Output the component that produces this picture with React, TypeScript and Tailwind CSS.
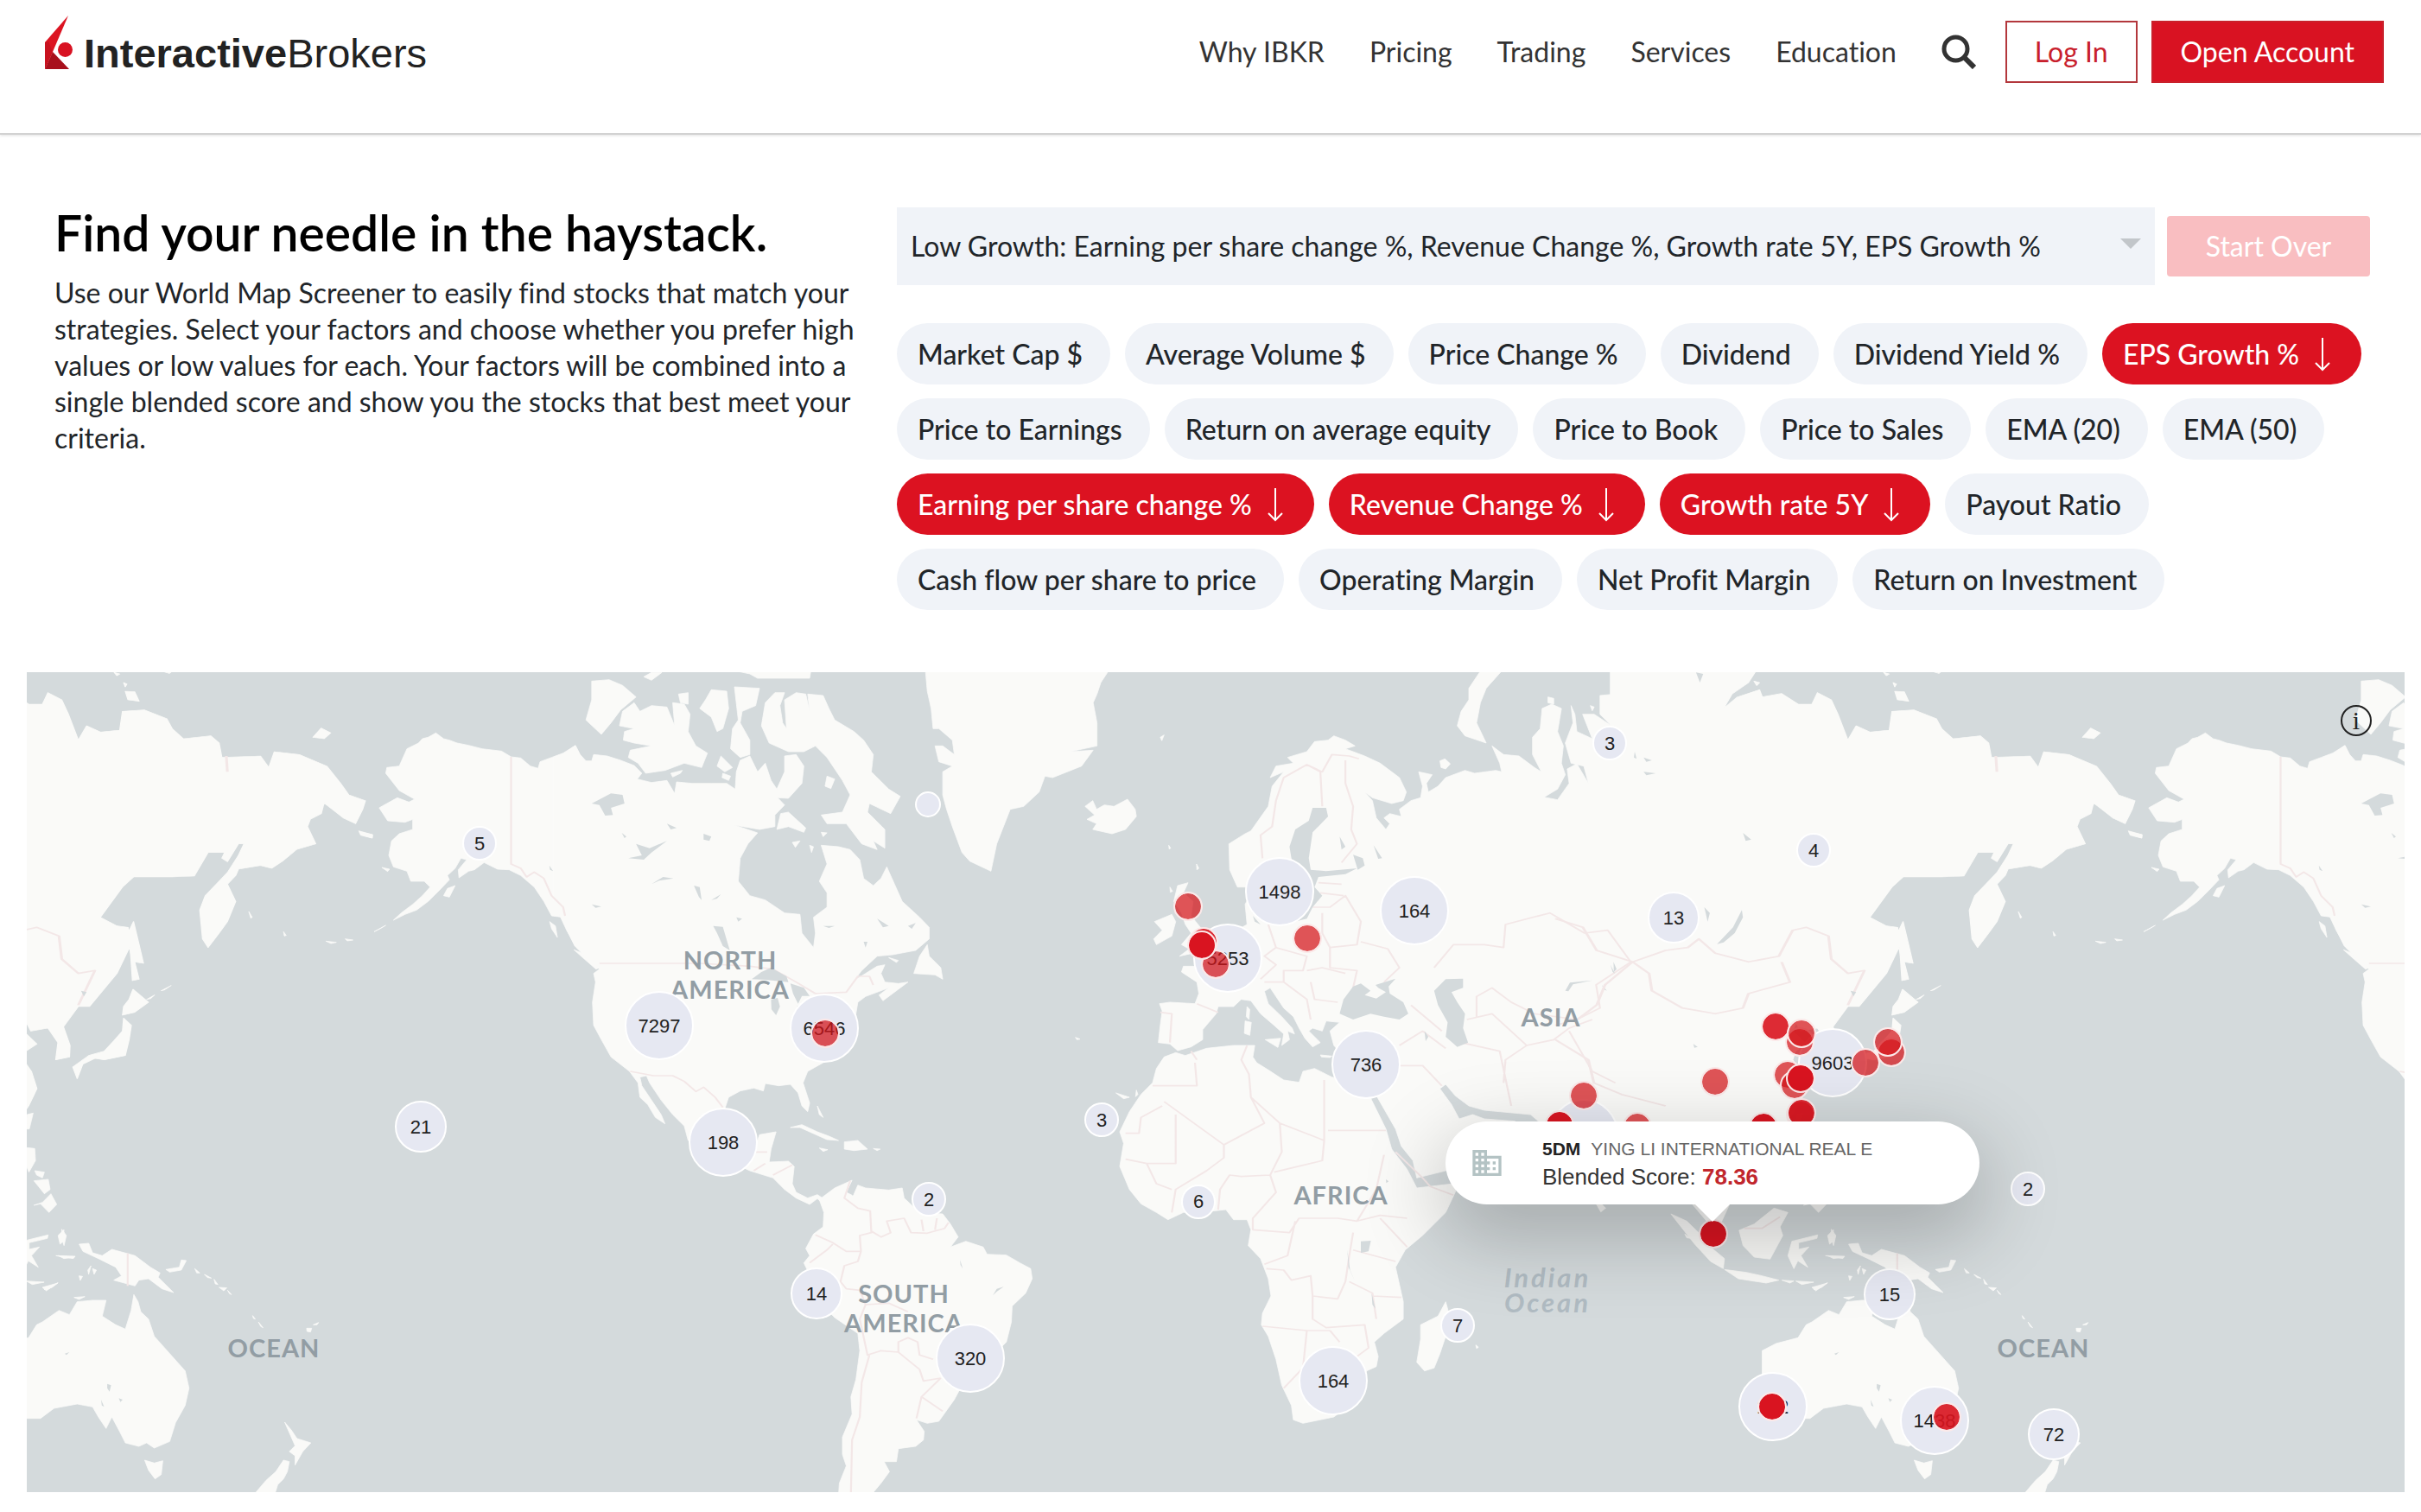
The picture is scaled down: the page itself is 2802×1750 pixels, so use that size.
import { useState } from 'react';
import { MdDomain } from 'react-icons/md';

const NAV = ['Why IBKR', 'Pricing', 'Trading', 'Services', 'Education'];

const FACTORS = [
    'Market Cap $', 'Average Volume $', 'Price Change %', 'Dividend', 'Dividend Yield %', 'EPS Growth %',
    'Price to Earnings', 'Return on average equity', 'Price to Book', 'Price to Sales', 'EMA (20)', 'EMA (50)',
    'Earning per share change %', 'Revenue Change %', 'Growth rate 5Y', 'Payout Ratio',
    'Cash flow per share to price', 'Operating Margin', 'Net Profit Margin', 'Return on Investment',
];

const LOW_GROWTH = ['EPS Growth %', 'Earning per share change %', 'Revenue Change %', 'Growth rate 5Y'];

// Visible window of the world, in map units. One world is 2048 units wide.
const VIEW = { x: 31, y: 778, w: 2752, h: 949 };
const WORLD = 2048;

// Coastlines, split in sheets that each carry their own origin and scale.
const SHEETS = [
    {
        id: 'alaska',
        transform: 'translate(0 760) scale(0.44643 0.33333)',
        land: [
            'M1130 265 1150 285 1165 290 1185 300 1215 308 1250 320 1300 328 1325 348 1350 352 1375 380 1395 388 1400 365 1430 350 1460 335 1490 310 1505 345 1505 1015 1490 1005 1470 950 1460 905 1430 900 1410 850 1385 800 1350 760 1320 740 1290 738 1255 715 1230 740 1215 745 1190 768 1188 740 1210 705 1195 700 1180 735 1160 760 1165 775 1140 810 1110 850 1080 880 1050 895 1020 915 1040 890 1070 860 1095 830 1115 800 1100 780 1065 780 1055 745 1020 730 1008 690 1015 640 1035 615 1070 600 1070 565 1050 575 1005 570 983 525 1030 490 1060 505 1075 495 1035 465 1000 405 1003 385 1035 380 1055 320 1085 300 1095 285 1110 280Z',
            'M930 605 965 618 965 630 935 620Z M990 732 1010 738 1005 746Z M1180 795 1165 835 1150 830 1160 805Z',
            'M970 955 1000 933 985 945Z M845 988 872 992 858 996Z M895 980 915 984 900 987Z M735 955 742 968 737 970Z M645 885 654 905 650 908Z',
            'M1425 920 1440 935 1445 975 1430 945Z M1488 1018 1520 1035 1555 1080 1545 1085 1515 1050Z',
        ],
        water: [],
        borders: ['M1325 348V720L1350 735 1365 765 1385 748 1410 770 1430 830 1460 870 1465 900'],
    },
    {
        id: 'north-america',
        transform: 'translate(600 760) scale(0.44643 0.33333)',
        land: [
            'M90 350 120 335 148 308 160 340 175 362 190 362 195 340 230 345 265 360 300 378 320 405 308 425 345 437 385 430 405 475 410 435 450 440 500 440 540 440 562 460 565 400 575 360 600 345 620 400 640 370 655 430 670 460 690 400 690 345 720 340 740 380 735 440 700 492 672 490 690 515 665 550 665 590 625 600 560 585 620 612 595 650 575 700 570 780 600 830 640 845 690 890 730 895 735 960 765 1010 770 960 765 905 800 870 800 820 780 780 800 720 785 655 830 660 860 670 885 705 895 770 920 795 940 770 955 730 975 790 995 850 1040 905 1065 940 1065 980 1030 1020 970 1035 930 1040 890 1090 870 1125 900 1100 930 1075 950 1070 940 1100 950 1130 985 1135 1010 1130 985 1155 945 1195 935 1175 960 1150 900 1180 880 1200 875 1240 870 1300 845 1370 790 1410 750 1440 738 1480 755 1550 750 1580 735 1560 725 1515 705 1485 675 1490 640 1482 635 1508 610 1498 575 1508 545 1530 535 1570 540 1640 580 1690 615 1700 625 1660 668 1650 655 1710 650 1755 700 1752 715 1770 710 1830 720 1860 750 1880 775 1868 800 1890 795 1905 775 1882 755 1902 720 1880 690 1850 660 1810 600 1785 560 1760 500 1745 440 1680 430 1630 400 1590 370 1540 340 1480 332 1455 315 1460 320 1490 345 1540 370 1590 380 1622 355 1600 335 1555 315 1530 310 1480 288 1440 240 1390 215 1330 195 1280 192 1200 200 1130 195 1100 210 1085 180 1050 150 1010 125 950 90 850Z',
            'M190 85 235 80 270 100 305 140 265 185 240 230 215 270 175 220 190 150Z',
            'M300 160 315 190 345 170 385 175 405 240 400 160 430 165 445 200 440 260 460 310 490 335 475 385 430 370 380 395 330 405 310 370 285 350 290 325 345 310 300 300 272 290 275 260 300 250 262 240 270 190Z',
            'M415 130 440 125 440 165 420 160Z M325 70 345 55 372 55 345 82Z M485 150 500 115 540 120 545 180 530 250 515 260 500 210 470 180Z',
            'M560 105 625 110 615 170 580 190 575 230 600 290 600 340 575 350 550 320 555 250 570 220Z M565 50 758 50 755 75 620 75 600 60Z',
            'M640 160 665 125 690 125 678 170 685 230 695 250 690 150 720 125 745 130 755 190 750 130 790 135 805 180 820 220 870 260 895 290 920 340 915 400 960 460 990 485 965 545 910 510 905 540 950 600 950 665 920 640 930 670 890 650 850 580 800 580 785 550 840 540 860 480 840 430 800 350 770 310 740 330 700 330 650 300 640 270 630 240Z',
            'M680 545 700 540 745 595 740 610 700 590 670 600Z M525 345 555 385 535 400 515 380Z M800 415 820 425 810 458 795 450Z M710 645 730 640 718 662Z M785 610 800 612 790 625Z M755 655 765 660 760 680Z M530 405 550 415 545 430 528 420Z M395 405 425 395 420 405 400 418Z',
            'M1060 1000 1065 1040 1095 1080 1100 1120 1080 1105 1025 1100 1040 1040Z M960 1045 985 1055 980 1062Z',
            'M1055 45 1532 45 1510 90 1500 130 1490 160 1500 230 1500 310 1430 330 1490 325 1460 380 1385 420 1365 415 1350 470 1310 520 1275 530 1240 650 1225 745 1170 710 1150 680 1125 590 1110 530 1100 480 1100 400 1125 380 1090 365 1080 310 1100 310 1130 340 1125 290 1090 250 1075 250 1070 180 1060 120Z',
            'M705 1635 735 1625 775 1650 805 1665 830 1680 800 1677 775 1662 730 1635Z M845 1685 880 1680 905 1710 870 1715 845 1710Z M780 1706 802 1712 790 1718Z M920 1708 938 1710 930 1715Z M775 1560 790 1600 780 1590Z',
        ],
        water: [
            'M190 510 240 475 270 480 275 510 240 525 245 550 225 552 210 515Z M285 700 320 690 305 650 340 665 385 640 345 680 325 705Z M345 790 375 765 402 770 365 778Z M505 935 530 938 548 1020 530 1005 515 960Z M455 795 470 800 475 845 468 835Z',
            'M605 1120 630 1095 655 1080 695 1110 700 1130 640 1122Z M655 1190 672 1185 678 1215 668 1245 656 1225Z M705 1135 740 1150 755 1178 735 1178 725 1205 712 1170Z M720 1215 765 1200 745 1212Z',
            'M268 612 280 625 275 630Z M385 580 410 595 395 600Z M480 615 500 625 495 640 480 635Z M565 905 580 910 570 920Z M930 910 960 935 945 940Z M1010 935 1030 925 1020 945Z M790 935 820 935 805 942Z M895 990 905 990 900 1010Z M190 860 215 868 200 872Z M500 845 525 825 515 840Z M80 725 90 745 82 740Z',
        ],
        borders: [
            'M210 1065H470L600 1075 660 1085 720 1130 770 1170 850 1165 880 1110 910 1110 920 1140',
            'M290 1440 350 1455 400 1455 430 1475 460 1510 480 1495 510 1530 530 1565',
            'M615 1720 645 1720M610 1785 640 1760M660 1800 710 1765',
        ],
    },
    {
        id: 'south-america',
        transform: 'translate(600 1240) scale(0.44643 0.33333)',
        land: [
            'M780 445 820 405 865 378 850 420 868 432 880 395 900 405 960 412 995 405 1000 440 1040 490 1100 495 1120 530 1140 575 1120 610 1160 590 1205 610 1215 635 1265 638 1300 665 1328 685 1332 720 1315 770 1280 815 1278 870 1265 940 1250 960 1230 1040 1150 1090 1130 1140 1090 1215 1060 1222 1032 1210 1052 1250 1050 1280 1030 1302 985 1310 980 1355 948 1355 962 1390 940 1430 915 1470 830 1470 832 1430 850 1370 840 1330 840 1270 865 1190 862 1130 875 1070 885 970 880 910 820 855 780 800 760 720 740 665 755 640 745 615 765 565 790 540 792 490Z',
        ],
        water: ['M862 415 870 420 866 432Z M1145 655 1152 685 1146 672Z M1230 778 1240 755 1258 748 1240 765Z'],
        borders: [
            'M860 380 845 440 880 475 912 485 915 560 885 570 888 625 850 625 815 595 770 568M755 665 800 620 815 600M888 625 880 660 845 675 835 730 850 755 885 760 900 810 960 805 1010 835',
            'M915 555 940 575 965 560 955 520 1000 510 1018 560 1060 562 1105 545 1115 525M900 810 885 860 905 985 940 970 985 975 1040 1035 1050 1075 1095 1065M985 975 985 940 1010 925 1035 940 1040 985 1075 1000M910 985 890 1080 885 1200 865 1280 862 1464M1095 1065 1045 1130 1100 1180M1045 1130 1032 1205M1045 515 1050 555M1085 510 1080 550',
        ],
    },
    {
        id: 'europe-africa',
        transform: 'translate(1200 760) scale(0.44643 0.33333)',
        land: [
            'M125 520 145 500 155 530 175 515 200 520 235 495 255 530 258 555 230 600 195 615 145 600 155 580 130 565 150 550Z',
            'M498 650 540 615 555 605 600 520 610 450 640 400 605 420 620 380 665 370 650 350 700 330 720 295 755 290 770 275 800 290 825 310 800 320 850 345 890 370 940 420 958 470 950 500 920 510 870 490 850 470 870 500 880 560 905 600 915 580 900 560 915 545 945 555 940 530 970 500 995 490 1000 450 990 400 1025 410 1010 440 1015 470 1040 450 1060 420 1110 395 1135 405 1190 395 1205 400 1200 370 1180 310 1210 340 1250 345 1290 385 1308 400 1285 340 1285 280 1305 250 1310 180 1335 165 1360 180 1350 260 1365 310 1360 370 1370 410 1350 460 1315 488 1350 497 1380 440 1375 390 1400 372 1430 440 1418 380 1385 370 1370 300 1390 230 1385 170 1395 200 1400 260 1440 285 1415 200 1445 200 1490 240 1460 200 1460 135 1540 125 1530 80 1530 45 1568 45 1568 1650 1300 1650 1300 1613 1280 1590 1160 1575 1120 1560 1085 1525 1060 1485 1045 1500 1075 1555 1095 1605 1130 1590 1160 1605 1240 1613 1240 1700 1090 1780 1060 1785 985 1810 975 1750 945 1700 930 1640 885 1535 870 1500 878 1440 865 1370 820 1385 790 1380 770 1350 760 1300 785 1270 750 1265 740 1300 715 1290 705 1300 735 1340 715 1355 695 1325 680 1290 665 1250 640 1220 605 1150 590 1162 600 1205 635 1250 662 1290 668 1310 650 1300 655 1330 635 1350 640 1310 615 1280 580 1240 555 1195 530 1190 510 1215 470 1215 465 1240 430 1295 430 1330 400 1355 365 1368 345 1345 315 1340 320 1280 325 1230 318 1205 345 1200 410 1205 420 1170 415 1130 375 1095 380 1075 415 1075 430 1040 480 1010 505 960 545 930 540 860 550 835 560 800 520 800 500 740Z',
            'M365 795 392 785 380 820 405 850 400 900 430 950 460 980 455 1010 420 1025 370 1040 395 1015 375 1000 400 960 385 930 375 890 355 850Z M305 920 350 895 360 920 350 970 310 1000 303 980 325 950Z M342 655 347 665 343 668Z M414 720 420 735 415 740Z M345 800 352 815 346 818Z',
            'M1150 50 1205 50 1165 110 1150 160 1140 230 1165 300 1110 275 1090 240 1100 190 1120 150 1120 110Z M1045 362 1058 355 1072 372 1060 390 1048 385Z M1325 140 1340 145 1340 165 1325 160Z M1435 170 1445 175 1440 188Z M320 280 330 272 324 292Z',
            'M545 1215 552 1225 550 1260 543 1250Z M540 1265 556 1270 552 1315 538 1308Z M592 1330 632 1325 625 1357Z M735 1383 765 1387 760 1392 738 1390Z',
            'M330 1390 360 1375 385 1385 440 1360 510 1350 565 1350 560 1390 570 1410 600 1435 640 1470 680 1478 690 1440 720 1430 765 1460 830 1480 875 1490 860 1510 868 1540 905 1640 920 1710 960 1780 985 1845 1080 1830 1088 1850 1060 1930 1000 2010 955 2060 930 2120 940 2180 950 2240 950 2300 900 2350 875 2380 885 2430 880 2465 855 2480 830 2550 800 2610 770 2640 690 2662 665 2650 660 2600 635 2530 620 2440 600 2360 582 2320 585 2280 607 2220 600 2160 580 2090 548 2045 555 1990 545 1955 510 1955 490 1920 455 1925 380 1930 340 1955 310 1930 270 1900 240 1850 215 1770 225 1690 215 1650 240 1580 270 1520 300 1480 310 1430Z',
            'M1060 2240 1068 2280 1060 2360 1045 2420 1030 2470 1005 2480 985 2450 995 2370 995 2320 1040 2290Z M1450 1900 1460 1895 1475 1915 1462 1928Z M205 1515 240 1530 225 1535Z M258 1505 262 1520 256 1528Z M100 1322 112 1328 104 1330Z M1138 2390 1145 2398 1140 2402Z',
        ],
        water: [
            'M715 525 750 525 755 555 715 610 705 700 710 740 750 745 830 735 800 755 730 765 720 800 740 830 715 870 700 910 640 930 590 900 600 830 640 800 680 760 660 700 655 660 670 600 705 570Z',
            'M785 1240 795 1190 820 1145 840 1135 865 1160 850 1175 880 1187 905 1165 885 1150 878 1140 930 1118 912 1145 915 1170 950 1200 963 1240 940 1260 900 1250 865 1240 820 1260Z',
            'M1030 1160 1060 1120 1105 1118 1105 1150 1075 1165 1090 1200 1110 1240 1105 1290 1118 1340 1090 1355 1060 1320 1065 1270 1040 1210Z',
            'M820 688 845 700 850 725 832 740Z M873 655 895 700 885 702Z M840 2030 866 2028 860 2065 840 2070Z M1370 1160 1382 1132 1440 1124 1390 1138 1378 1162Z M805 2060 808 2120 825 2170 812 2130Z M868 2210 878 2265 870 2250Z M560 900 580 930 565 920Z M905 1815 912 1822 906 1828Z M1465 1140 1478 1160 1470 1155Z M1495 1060 1503 1085 1496 1095Z M960 1170 945 1180Z M785 625 800 660 790 670Z M1550 330 1555 355 1548 350Z M1005 1300 1015 1320 1008 1335Z',
        ],
        borders: [
            'M585 700 580 620 610 590 620 500 640 420 700 375 735 400 740 520M700 375 740 400 765 340 810 345 835 355M800 360 800 440 820 520 815 600 830 650 790 715',
            'M320 1235 350 1240 345 1340M415 1205 470 1235M600 930 620 1010 590 1040 620 1070 580 1120M620 1010 700 1040 690 1090 640 1090 640 1130 590 1130M715 870 760 870 800 830 840 920 830 1000 760 1010 740 960 740 890M760 1010 760 1080 830 1090 820 1150M700 1090 740 1080 800 1100M640 1130 700 1190 710 1260M710 1130 720 1190 780 1200M840 990 910 1015 940 1080 900 1130M730 785 790 790M735 820 795 830',
            'M1030 1080 1080 1000 1160 1000 1210 1010 1215 930 1330 890 1420 960 1480 950 1540 1060 1450 1140 1460 1220 1400 1260 1290 1240 1230 1200 1180 1150 1140 1180 1140 1250M1115 1260 1180 1240 1270 1350 1340 1330 1380 1290 1440 1260M1210 1480 1215 1400 1270 1350M1380 1300 1440 1440 1500 1480M970 1210 1050 1300M940 1350 1000 1300 1060 1360M930 1420 1000 1420 1050 1490M1100 1340 1200 1370 1230 1560',
            'M300 1490H415L410 1410M415 1400 400 1370M330 1545 485 1695 590 1620 555 1530 550 1450 530 1400 545 1350M555 1530 630 1620 745 1680V1470M755 1645H905M745 1680 740 1750 615 1790M630 1620 635 1720 605 1800 530 1805 500 1800 475 1850 470 1920M230 1655H265L270 1600 325 1560M360 1590V1760L285 1760 230 1745M485 1695V1740L440 1785 360 1850 350 1930M285 1760 310 1830 350 1850M605 1800 620 1860 560 1950 560 1990 655 2000 680 1950 780 1950 830 1960 890 1940 960 1950M900 1730 880 1850 830 1960M930 1720 1000 1810 1020 1840 1080 1870M890 1950 960 2050M670 1960 650 2080 590 2110M595 2125 640 2130 660 2165 710 2150 715 2220 780 2230 800 2170 810 2080 820 2000M715 2220V2300L750 2330 850 2320 860 2400 830 2430M585 2325 700 2340 760 2340M700 2340 690 2470 640 2540M760 2340 785 2380M820 2060 930 2100M870 2220 945 2225M810 2170 870 2210 880 2300',
        ],
    },
    {
        id: 'east-asia',
        transform: 'translate(1800 760) scale(0.63898 0.33333)',
        land: [
            'M135 45 365 45 350 90 320 130 305 180 330 140 370 115 375 140 410 128 440 165 465 165 475 125 500 150 512 200 530 290 545 240 570 262 605 255 610 190 650 185 690 215 700 250 720 285 770 275 785 300 790 350 860 345 875 385 885 330 930 340 980 380 1005 440 1020 480 1050 500 1045 530 1032 580 1010 560 990 530 975 508 970 545 950 565 945 590 960 650 925 670 900 710 880 735 860 725 820 738 815 760 800 790 815 850 800 920 785 960 765 1010 755 980 750 880 760 830 800 750 820 690 830 650 820 650 800 712 790 700 795 680 765 680 740 762 700 765 630 765 610 800 570 905 600 935 620 940 625 1000 600 1100 550 1215 530 1215 503 1285 515 1350 514 1390 489 1400 493 1340 475 1290 444 1300 436 1270 430 1300 455 1345 435 1370 430 1400 445 1440 455 1500 440 1560 425 1600 425 1650 100 1650 100 45Z',
            'M630 920 640 1000 648 1065 632 1060 640 1120 628 1125 625 1040 620 960Z M629 1155 657 1200 632 1235 610 1245 612 1215 622 1190Z',
            'M612 1255 626 1280 622 1330 615 1385 577 1400 560 1395 538 1415 528 1465 520 1425 549 1385 577 1370 594 1335 610 1300Z',
            'M955 280 970 248 987 265 975 285Z M615 120 632 122 640 155 620 150Z M612 90 618 95 615 105Z M595 55 605 60 600 66Z M680 50 700 50 695 58Z M654 1190 668 1175 660 1188Z M680 1160 698 1142 685 1158Z M360 85 370 90 365 100Z',
            'M1040 608 1063 618 1062 630 1045 620Z',
        ],
        water: ['M293 998 322 940 338 880 340 905 325 960 305 992Z M255 55 262 90 268 60Z M340 612 355 635 345 640Z M100 1070 108 1100 104 1095Z M535 1160 545 1165 540 1180Z M270 870 280 890 276 920Z M160 350 175 360 165 365Z M160 400 182 405 165 412Z M250 1345 258 1355 252 1358Z'],
        borders: [
            'M0 910 50 940 75 1020 140 1060 200 1020 240 1010 260 980 290 1030 350 1060 405 1040 430 950 455 940 495 970 500 1050 530 1100 560 1090 545 1150 530 1210',
            'M140 1060 170 1100 175 1160 230 1220 290 1240 340 1220 350 1170 425 1130 410 1060M140 1060 90 1140 75 1210 40 1260 0 1280M0 1330 60 1400 70 1480 120 1520 200 1560',
            'M798 345 800 400',
        ],
    },
    {
        id: 'indonesia',
        transform: 'translate(1640 1120) scale(0.45914 0.33333)',
        land: [
            'M640 855 680 880 710 920 740 970 775 1010 772 1045 740 1020 700 960 660 890Z M690 815H790L765 890 730 880Z',
            'M812 912 850 890 900 835 935 850 915 900 922 930 890 1012 850 1005 822 965Z M945 950 1010 928 1008 940 962 955 962 978 988 970 968 1000 985 1040 960 1018 950 1045 935 1000Z',
            'M775 1048 830 1058 870 1070 912 1085 880 1095 810 1080Z M920 1085 950 1088 940 1095Z M955 1088 1000 1092 970 1100Z M1000 1118 1035 1094 1020 1110Z M1035 930 1050 910 1048 950 1040 960Z M1035 1000 1075 1005 1050 1010Z M1110 1050 1118 1035 1112 1065Z',
            'M705 935 712 950 706 948Z M675 925 690 940 680 938Z',
        ],
        water: [],
        borders: ['M825 905 870 905 915 865'],
    },
    {
        id: 'oceania',
        transform: 'translate(2048 1240) scale(0.44643 0.33333)',
        land: [
            'M-19 1000-19 970 17 945 74 925 95 880 110 870 153 830 180 845 200 800 240 795 275 795 265 850 300 880 325 895 340 830 347 775 358 800 365 835 385 860 400 920 440 980 480 1040 490 1100 480 1160 455 1220 440 1285 400 1308 380 1290 360 1302 325 1290 310 1250 290 1200 275 1240 255 1200 240 1165 200 1155 140 1170 105 1205 70 1205 20 1230-5 1180 0 1120-19 1050Z',
            'M375 1350 400 1360 422 1352 418 1400 402 1415 385 1385Z M738 1218 755 1245 770 1275 806 1290 785 1320 765 1367 765 1335 750 1320 765 1300Z M735 1350 750 1355 745 1390 735 1415 720 1435 712 1470 658 1470 690 1420 715 1390Z',
            'M205 600 230 597 240 630 265 640 290 618 350 640 390 680 415 700 410 715 450 768 420 755 385 720 360 725 350 745 295 725 315 710 300 680 255 650 215 625Z',
            'M430 688 465 680 470 655 483 657 470 690 440 697Z M505 685 518 700 510 700Z M530 705 548 718 538 716Z M555 722 565 740 558 738Z M568 750 588 752 580 762Z M590 760 600 775 595 772Z M655 848 662 860 657 858Z M670 870 682 890 676 886Z M795 892 808 892 805 905 796 903Z M812 880 826 872 822 880Z',
            'M160 548 172 570 166 605 160 580Z M145 640 195 642 190 650 165 645Z M110 750 150 735 120 762Z M192 785 220 782 205 792Z M240 685 250 690 244 705Z M205 710 214 712 208 726Z',
            'M69 265 90 268 92 310 75 350 69 330Z M90 345 115 350 110 370 95 360Z M88 380 125 375 130 410 115 425 100 400Z M88 465 110 455 132 425 147 462 127 490 105 460Z M70 150 86 145 76 200 68 200Z',
        ],
        water: ['M278 1085 288 1090 284 1112 278 1100Z M262 1140 270 1165 264 1160Z M308 1135 318 1140 312 1148Z M168 980 180 975 172 985Z'],
        borders: ['M331 632V745'],
    },
];

const LABELS = [
    { x: 845, y: 1122, lines: ['NORTH', 'AMERICA'] },
    { x: 1046, y: 1508, lines: ['SOUTH', 'AMERICA'] },
    { x: 1552, y: 1394, lines: ['AFRICA'] },
    { x: 1795, y: 1188, lines: ['ASIA'] },
    { x: 2365, y: 1571, lines: ['OCEAN'] },
];

type Size = 'xs' | 'sm' | 'md' | 'lg';

const CLUSTER_SIZE: Record<Size, string> = {
    xs: 'size-[30px]',
    sm: 'size-10',
    md: 'size-[60px]',
    lg: 'size-20',
};

const CLUSTERS: { n: string; x: number; y: number; size: Size }[] = [
    { n: '5', x: 555, y: 976, size: 'sm' },
    { n: '7297', x: 763, y: 1187, size: 'lg' },
    { n: '6546', x: 954, y: 1190, size: 'lg' },
    { n: '', x: 1074, y: 931, size: 'xs' },
    { n: '3', x: 1863, y: 860, size: 'sm' },
    { n: '1498', x: 1481, y: 1032, size: 'lg' },
    { n: '164', x: 1637, y: 1054, size: 'lg' },
    { n: '5253', x: 1421, y: 1109, size: 'lg' },
    { n: '736', x: 1581, y: 1232, size: 'lg' },
    { n: '4', x: 2099, y: 984, size: 'sm' },
    { n: '13', x: 1937, y: 1062, size: 'md' },
    { n: '9603', x: 2121, y: 1230, size: 'lg' },
    { n: '21', x: 487, y: 1304, size: 'md' },
    { n: '198', x: 837, y: 1322, size: 'lg' },
    { n: '3', x: 1275, y: 1296, size: 'sm' },
    { n: '2', x: 1075, y: 1388, size: 'sm' },
    { n: '14', x: 945, y: 1497, size: 'md' },
    { n: '320', x: 1123, y: 1572, size: 'lg' },
    { n: '6', x: 1387, y: 1391, size: 'sm' },
    { n: '7', x: 1687, y: 1534, size: 'sm' },
    { n: '164', x: 1543, y: 1598, size: 'lg' },
    { n: '', x: 1833, y: 1312, size: 'lg' },
    { n: '2', x: 2347, y: 1376, size: 'sm' },
    { n: '15', x: 2187, y: 1498, size: 'md' },
    { n: '212', x: 2052, y: 1628, size: 'lg' },
    { n: '1438', x: 2239, y: 1644, size: 'lg' },
    { n: '72', x: 2377, y: 1660, size: 'md' },
];

type Tone = 'light' | 'strong' | 'solid';

const TONE: Record<Tone, string> = {
    light: 'bg-[#d41419]/72',
    strong: 'bg-[#d9141e]/90',
    solid: 'bg-[#d91420]',
};

const STOCKS: { x: number; y: number; tone: Tone }[] = [
    { x: 1375, y: 1049, tone: 'light' },
    { x: 1513, y: 1086, tone: 'light' },
    { x: 1393, y: 1090, tone: 'strong' },
    { x: 1407, y: 1116, tone: 'light' },
    { x: 1391, y: 1094, tone: 'solid' },
    { x: 955, y: 1196, tone: 'light' },
    { x: 2055, y: 1188, tone: 'strong' },
    { x: 2083, y: 1206, tone: 'light' },
    { x: 2085, y: 1196, tone: 'light' },
    { x: 2189, y: 1218, tone: 'light' },
    { x: 2185, y: 1206, tone: 'light' },
    { x: 2159, y: 1230, tone: 'light' },
    { x: 2069, y: 1244, tone: 'light' },
    { x: 2077, y: 1256, tone: 'light' },
    { x: 2084, y: 1248, tone: 'solid' },
    { x: 2084, y: 1290, tone: 'light' },
    { x: 2085, y: 1288, tone: 'strong' },
    { x: 1985, y: 1252, tone: 'light' },
    { x: 1833, y: 1268, tone: 'light' },
    { x: 1805, y: 1302, tone: 'solid' },
    { x: 1895, y: 1304, tone: 'light' },
    { x: 2041, y: 1304, tone: 'solid' },
    { x: 2051, y: 1628, tone: 'solid' },
    { x: 2253, y: 1640, tone: 'strong' },
    { x: 1983, y: 1428, tone: 'solid' },
];

// Map units to a percentage of the map box
const place = (x: number, y: number) => ({
    left: `${((x - VIEW.x) / VIEW.w) * 100}%`,
    top: `${((y - VIEW.y) / VIEW.h) * 100}%`,
});

function Logo() {
    return (
        <a href="#" className="flex items-end gap-3 font-['Liberation_Sans',sans-serif] text-[47px] leading-none text-[#222]">
            <svg viewBox="0 0 33 63" className="mb-1 h-[63px] w-[33px]" aria-hidden="true">
                <path d="M27 0 0 31V62L9 42Z" fill="#dc1422" />
                <path d="M9 42 0 62H28Z" fill="#a8101c" />
                <path d="M0 31V62L9 42 4 30Z" fill="#c8121f" />
                <circle cx="23.5" cy="39.5" r="8.5" fill="#d81222" />
            </svg>
            <span><b>Interactive</b>Brokers</span>
        </a>
    );
}

function Header() {
    return (
        <header className="flex h-[156px] items-start justify-between border-b-2 border-[#d2d2d2] pt-[18px] pr-[43px] pl-[52px] shadow-[0_1px_3px_rgba(0,0,0,0.12)]">
            <Logo />
            <nav className="flex items-center gap-[52px] pt-[6px] text-[32px] text-[#333]">
                {NAV.map((item) => (
                    <a key={item} href="#">{item}</a>
                ))}
                <button type="button" aria-label="Search">
                    <svg viewBox="0 0 40 40" className="size-10" fill="none" stroke="#333" strokeWidth="5">
                        <circle cx="16.5" cy="16.5" r="13.5" />
                        <path d="m26 26 12 12" strokeWidth="6" />
                    </svg>
                </button>
                <div className="-ml-[18px] flex gap-4">
                    <button type="button" className="h-[72px] border-2 border-[#b3373c] px-8 text-[#c8202c]">Log In</button>
                    <button type="button" className="h-[72px] border-2 border-[#c9202a] bg-[#d91222] px-8 text-white">Open Account</button>
                </div>
            </nav>
        </header>
    );
}

function FactorChip({ name, active, onToggle }: { name: string; active: boolean; onToggle: () => void }) {
    return (
        <button
            type="button"
            aria-pressed={active}
            onClick={onToggle}
            className={
                active
                    ? 'flex h-[71px] items-center gap-[18px] rounded-full bg-[#dc1221] pr-9 pl-6 text-white'
                    : 'flex h-[71px] items-center rounded-full bg-[#f0f3f8] pr-8 pl-6 text-[#212529]'
            }
        >
            {name}
            {active && (
                <svg viewBox="0 0 18 40" className="h-10 w-[18px]" fill="none" stroke="currentColor" strokeWidth="2">
                    <path d="M9 1v37M1 30l8 8 8-8" />
                </svg>
            )}
        </button>
    );
}

function WorldMap() {
    return (
        <svg viewBox={`${VIEW.x} ${VIEW.y} ${VIEW.w} ${VIEW.h}`} className="block w-full bg-[#d4dadc]" role="img" aria-label="World map">
            <defs>
                <g id="world">
                    {SHEETS.map((sheet) => (
                        <g key={sheet.id} transform={sheet.transform}>
                            <path d={sheet.land.join(' ')} fill="#fafaf8" stroke="#fafaf8" strokeWidth="2" strokeLinejoin="round" />
                        </g>
                    ))}
                    {SHEETS.map((sheet) => (
                        <g key={sheet.id} transform={sheet.transform}>
                            <path d={sheet.borders.join(' ')} fill="none" stroke="#f3e7e7" strokeWidth="5" strokeLinejoin="round" />
                            <path d={sheet.water.join(' ')} fill="#d4dadc" />
                        </g>
                    ))}
                    <g fontFamily="Lato, sans-serif" fontSize="29" fontWeight="700" fill="#929da4" textAnchor="middle" letterSpacing="1">
                        {LABELS.map(({ x, y, lines }) =>
                            lines.map((line, i) => (
                                <text key={`${x}-${line}`} x={x} y={y + i * 34}>{line}</text>
                            ))
                        )}
                        <g fill="#b0bbc2" fontSize="31" fontStyle="italic" letterSpacing="3">
                            <text x="1791" y="1490">Indian</text>
                            <text x="1791" y="1519">Ocean</text>
                        </g>
                    </g>
                </g>
            </defs>
            <use href="#world" x={-WORLD} />
            <use href="#world" />
            <use href="#world" x={WORLD} />
        </svg>
    );
}

function StockTooltip() {
    return (
        <div
            className="absolute flex h-24 w-[618px] -translate-x-1/2 items-center rounded-full bg-white pl-7 shadow-[0_30px_90px_10px_rgba(0,0,0,0.22)]"
            style={place(1982, 1298)}
        >
            <MdDomain className="size-10 shrink-0 text-[#b4c3c4]" />
            <div className="ml-11 font-['Liberation_Sans',sans-serif] whitespace-nowrap">
                <p className="text-[21px] leading-8 text-[#666]"><b className="mr-3 text-[#222]">5DM</b>YING LI INTERNATIONAL REAL E</p>
                <p className="text-[26px] leading-8 text-[#333]">Blended Score: <b className="text-[#c1272d]">78.36</b></p>
            </div>
            <svg viewBox="0 0 40 20" className="absolute top-full left-1/2 h-5 w-10 -translate-x-1/2" aria-hidden="true">
                <path d="M0 0H40L20 20Z" fill="#fff" />
            </svg>
        </div>
    );
}

export default function App() {
    const [selected, setSelected] = useState<string[]>(LOW_GROWTH);

    const toggle = (name: string) =>
        setSelected((prev) => (prev.includes(name) ? prev.filter((f) => f !== name) : [...prev, name]));

    return (
        <div className="bg-white font-[Lato,sans-serif] text-[#212529] [font-variant-ligatures:none]">
            <Header />
            <main>
                <section className="flex gap-[38px] pt-[84px] pr-[59px] pl-[63px]">
                    <div className="w-[937px] shrink-0">
                        <h1 className="text-[57px] leading-[58px] font-semibold text-black">Find your needle in the haystack.</h1>
                        <p className="mt-5 text-[32px] leading-[42px]">
                            Use our World Map Screener to easily find stocks that match your strategies. Select your factors and choose
                            whether you prefer high values or low values for each. Your factors will be combined into a single blended
                            score and show you the stocks that best meet your criteria.
                        </p>
                    </div>
                    <div className="min-w-0 flex-1">
                        <div className="flex items-center gap-[14px]">
                            <div className="relative flex-1">
                                <select aria-label="Strategy" className="h-[90px] w-full appearance-none bg-[#f0f3f8] px-4 text-[32px]">
                                    <option>Low Growth: Earning per share change %, Revenue Change %, Growth rate 5Y, EPS Growth %</option>
                                </select>
                                <svg viewBox="0 0 24 12" className="pointer-events-none absolute top-9 right-4 h-3 w-6" aria-hidden="true">
                                    <path d="M0 0h24L12 12Z" fill="#c2c6ca" />
                                </svg>
                            </div>
                            <button type="button" onClick={() => setSelected([])} className="h-[70px] w-[235px] rounded bg-[#f9bec1] text-[32px] text-white">
                                Start Over
                            </button>
                        </div>
                        <div className="mt-11 flex flex-wrap gap-x-[17px] gap-y-4 text-[32px] font-medium">
                            {FACTORS.map((name) => (
                                <FactorChip key={name} name={name} active={selected.includes(name)} onToggle={() => toggle(name)} />
                            ))}
                        </div>
                    </div>
                </section>

                <section className="relative mt-[72px] mr-[19px] mb-6 ml-[31px] overflow-hidden">
                    <WorldMap />
                    {CLUSTERS.map(({ n, x, y, size }) => (
                        <span
                            key={`${x}-${y}`}
                            className={`${CLUSTER_SIZE[size]} absolute flex -translate-1/2 items-center justify-center rounded-full border-2 border-white bg-[#e6e8f2] font-['Liberation_Sans',sans-serif] text-[22px] text-[#222]`}
                            style={place(x, y)}
                        >
                            {n}
                        </span>
                    ))}
                    {STOCKS.map(({ x, y, tone }, i) => (
                        <span
                            key={i}
                            className={`${TONE[tone]} absolute size-[34px] -translate-1/2 rounded-full border-2 border-[#fbe9e9] bg-clip-padding`}
                            style={place(x, y)}
                        />
                    ))}
                    <StockTooltip />
                    <button
                        type="button"
                        aria-label="Map information"
                        className="absolute top-[38px] right-[38px] flex size-9 items-center justify-center rounded-full border-2 border-[#222] font-['Liberation_Serif',serif] text-[30px] leading-none text-[#222]"
                    >
                        i
                    </button>
                </section>
            </main>
        </div>
    );
}
